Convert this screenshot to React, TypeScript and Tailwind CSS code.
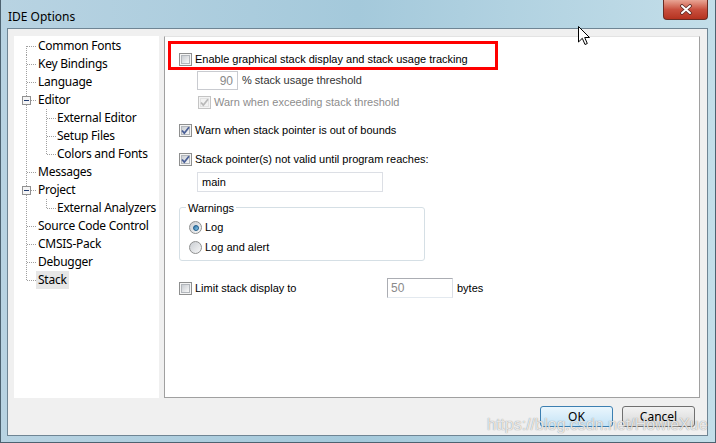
import React from "react";

const treeItems = [
  { label: "Common Fonts", level: 1, first: true },
  { label: "Key Bindings", level: 1 },
  { label: "Language", level: 1 },
  { label: "Editor", level: 1, expand: true },
  { label: "External Editor", level: 2 },
  { label: "Setup Files", level: 2 },
  { label: "Colors and Fonts", level: 2, lastChild: true },
  { label: "Messages", level: 1 },
  { label: "Project", level: 1, expand: true },
  { label: "External Analyzers", level: 2, lastChild: true },
  { label: "Source Code Control", level: 1 },
  { label: "CMSIS-Pack", level: 1 },
  { label: "Debugger", level: 1 },
  { label: "Stack", level: 1, last: true, selected: true },
];

type TreeItem = {
  label: string;
  level: number;
  first?: boolean;
  last?: boolean;
  expand?: boolean;
  lastChild?: boolean;
  selected?: boolean;
};

// dotted connectors drawn per row
const Gutter = ({ item }: { item: TreeItem }) => {
  const w = item.level === 1 ? 24 : 43;
  return (
    <svg width={w} height={18} className="shrink-0">
      <line
        x1={12.5}
        x2={12.5}
        y1={item.first ? 9 : 0}
        y2={item.last ? 9 : 18}
        stroke="#a0a0a0"
        strokeDasharray="1 1"
      />
      {item.level === 1 ? (
        <line x1={13} x2={23} y1={9.5} y2={9.5} stroke="#a0a0a0" strokeDasharray="1 1" />
      ) : (
        <>
          <line
            x1={32.5}
            x2={32.5}
            y1={0}
            y2={item.lastChild ? 9 : 18}
            stroke="#a0a0a0"
            strokeDasharray="1 1"
          />
          <line x1={33} x2={42} y1={9.5} y2={9.5} stroke="#a0a0a0" strokeDasharray="1 1" />
        </>
      )}
      {item.expand && (
        <>
          <rect x={8.5} y={5.5} width={8} height={8} fill="#f4f4f4" stroke="#919191" />
          <line x1={10} x2={15} y1={9.5} y2={9.5} stroke="#1f3a70" />
        </>
      )}
    </svg>
  );
};

const Check = ({ checked, disabled }: { checked?: boolean; disabled?: boolean }) => (
  <span
    className={`relative flex h-[13px] w-[13px] shrink-0 items-center justify-center border bg-[#f4f4f4] ${
      disabled ? "border-[#c4c4c4]" : "border-[#8e8f8f]"
    }`}
  >
    <span
      className={`h-[9px] w-[9px] border ${
        disabled
          ? "border-[#e2e2e2] bg-[#f2f2f2]"
          : "border-[#b2b6bb] bg-linear-to-br from-[#c9cdd2] to-[#f8f8f8]"
      }`}
    />
    {checked && (
      <svg width="13" height="13" viewBox="0 0 13 13" className="absolute left-[-1px] top-[-1px]">
        <path
          d="M3 6.5 L5.3 9.2 L10 3.2"
          fill="none"
          stroke={disabled ? "#b8b8b8" : "#4a5f97"}
          strokeWidth="1.8"
        />
      </svg>
    )}
  </span>
);

const Radio = ({ on }: { on?: boolean }) => (
  <span className="flex h-[13px] w-[13px] shrink-0 items-center justify-center rounded-full border border-[#8e8f8f] bg-linear-to-br from-[#c9cdd2] to-[#f8f8f8]">
    {on && (
      <span className="h-[6px] w-[6px] rounded-full border border-[#1d5b8a] bg-linear-to-br from-[#2b6fa3] to-[#8fd0f0]" />
    )}
  </span>
);

const Button = ({ label, def }: { label: string; def?: boolean }) => (
  <div
    className={`flex h-[21px] w-[73px] items-center justify-center rounded-[3px] border text-[12px] text-black ${
      def
        ? "border-[#3c7fb1] bg-linear-to-b from-[#eaf6fd] to-[#c4e3f6]"
        : "border-[#707070] bg-linear-to-b from-[#f2f2f2] to-[#d8d8d8]"
    }`}
  >
    {label}
  </div>
);

export default function App() {
  const sans = "font-['Liberation_Sans',Arial,sans-serif]";
  return (
    <div className="relative flex h-[443px] w-[716px] flex-col overflow-hidden border-x border-b border-[#4d6270] bg-linear-to-r from-[#b8d3e2] via-[#a4c9db] to-[#c3dee9] font-['Noto_Sans',sans-serif] text-[12px] text-black">
      {/* title bar */}
      <div className="flex h-[28px] shrink-0 items-center justify-between">
        <span className="pl-[7px] pt-[5px] text-[12px]">IDE Options</span>
        <div className="mb-[8px] mr-[7px] flex h-[20px] w-[45px] items-center justify-center self-start rounded-b-[4px] border border-t-0 border-[#6a2c24] bg-linear-to-b from-[#e8a595] via-[#c9503f] to-[#b5321f]">
          <svg width="14" height="11" viewBox="0 0 14 11">
            <path d="M3 2 L11 9 M11 2 L3 9" stroke="#5a2a24" strokeWidth="3.6" strokeLinecap="round" />
            <path d="M3 2 L11 9 M11 2 L3 9" stroke="#ffffff" strokeWidth="2" strokeLinecap="round" />
          </svg>
        </div>
      </div>

      <div className="flex flex-1 px-[6px] pr-[7px]">
        {/* client area */}
        <div className="flex flex-1 flex-col border border-[#6f8594] bg-[#f0f0f0]">
          <div className="mt-[7px] flex h-[362px] pl-[6px] pr-[7px]">
            {/* tree */}
            <div className="flex w-[145px] shrink-0 flex-col overflow-hidden bg-white pt-[1px] tracking-[-0.25px]">
              {treeItems.map((it) => (
                <div key={it.label} className="flex h-[18px] items-center whitespace-nowrap">
                  <Gutter item={it} />
                  <span
                    className={`ml-[-2px] flex h-[18px] items-center px-[2px] ${
                      it.selected ? "bg-[#e6e6e6]" : ""
                    }`}
                  >
                    {it.label}
                  </span>
                </div>
              ))}
            </div>

            {/* page */}
            <div
              className={`ml-[5px] flex flex-1 flex-col border border-[#a0a0a0] border-t-[#e3e3e3] bg-white pl-[14px] text-[11px] ${sans}`}
            >
              <div className="mt-[16px] flex h-[13px] items-center gap-[3px]">
                <Check />
                <span>Enable graphical stack display and stack usage tracking</span>
              </div>
              <div className="ml-[18px] mt-[5px] flex items-center gap-[4px]">
                <div className="flex h-[19px] w-[41px] items-center justify-end border border-[#c9cbd0] pr-[4px] text-[12px] text-[#8a8a8a]">
                  90
                </div>
                <span className="text-[#333]">% stack usage threshold</span>
              </div>
              <div className="ml-[19px] mt-[6px] flex h-[13px] items-center gap-[3px] text-[#8d8d8d]">
                <Check checked disabled />
                <span>Warn when exceeding stack threshold</span>
              </div>
              <div className="mt-[15px] flex h-[13px] items-center gap-[3px]">
                <Check checked />
                <span>Warn when stack pointer is out of bounds</span>
              </div>
              <div className="mt-[16px] flex h-[13px] items-center gap-[3px]">
                <Check checked />
                <span>Stack pointer(s) not valid until program reaches:</span>
              </div>
              <div className="ml-[18px] mt-[6px] flex h-[20px] w-[186px] items-center border border-[#dcdfe5] pl-[4px]">
                main
              </div>

              <div className="relative mt-[15px] h-[54px] w-[246px] rounded-[3px] border border-[#d5dfe5] pl-[9px] pt-[13px]">
                <span className="absolute left-[6px] top-[-8px] bg-white px-[2px]">Warnings</span>
                <div className="flex h-[13px] items-center gap-[3px]">
                  <Radio on />
                  <span>Log</span>
                </div>
                <div className="mt-[7px] flex h-[13px] items-center gap-[3px]">
                  <Radio />
                  <span>Log and alert</span>
                </div>
              </div>

              <div className="mt-[17px] flex h-[20px] items-center">
                <div className="flex w-[208px] items-center gap-[3px]">
                  <Check />
                  <span>Limit stack display to</span>
                </div>
                <div className="flex h-[20px] w-[66px] items-center border border-[#abadb3] border-b-[#e3e9ef] border-r-[#dbdfe6] pl-[3px] text-[12px] text-[#8a8a8a]">
                  50
                </div>
                <span className="ml-[4px]">bytes</span>
              </div>
            </div>
          </div>

          <div className="mt-[8px] flex justify-end gap-[9px] pr-[12px]">
            <Button label="OK" def />
            <Button label="Cancel" />
          </div>
        </div>
      </div>
      <div className="h-[6px] shrink-0" />

      {/* annotation box */}
      <div className="absolute left-[167px] top-[41px] h-[29px] w-[330px] border-[3px] border-[#ff0000]" />

      {/* mouse cursor */}
      <svg className="absolute left-[577px] top-[26px]" width="13" height="20" viewBox="0 0 13 20">
        <path d="M0.5 0.5 L0.5 16 L4.3 12.3 L7 18.5 L9.3 17.5 L6.7 11.5 L11.5 11.5 Z" fill="#fff" stroke="#000" />
      </svg>

      {/* watermark */}
      <span
        className={`absolute left-[486px] top-[413px] text-[16px] text-white/80 [text-shadow:0_0_1px_rgba(60,60,60,0.7)] ${sans}`}
      >
        https://blog.csdn.net/HowieXue
      </span>
    </div>
  );
}
